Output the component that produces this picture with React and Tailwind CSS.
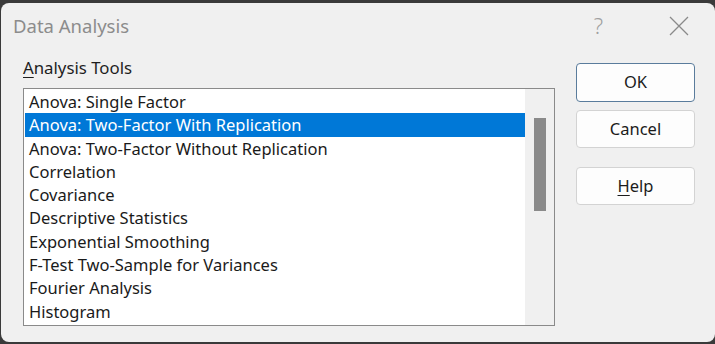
import React from 'react';

const tools = [
  'Anova: Single Factor',
  'Anova: Two-Factor With Replication',
  'Anova: Two-Factor Without Replication',
  'Correlation',
  'Covariance',
  'Descriptive Statistics',
  'Exponential Smoothing',
  'F-Test Two-Sample for Variances',
  'Fourier Analysis',
  'Histogram',
];

const Btn = ({ children, primary }) => (
  <button
    className={`w-[119px] rounded-[4px] border bg-[#fdfdfd] text-[16.5px] text-[#1b1b1b] ${
      primary ? 'h-[39px] border-[#5a7c9c]' : 'h-[38px] border-[#d3d3d3]'
    }`}
  >
    {children}
  </button>
);

export default function App() {
  return (
    <div className="w-[715px] h-[344px] bg-[#3a3a3a] pt-[3px] pl-[1px] overflow-hidden" style={{ fontFamily: '"Noto Sans", "Open Sans", sans-serif' }}>
      <div className="w-[714px] h-[339px] bg-[#f0f0f0] rounded-[8px] flex flex-col">
        {/* title bar */}
        <div className="h-[45px] flex items-center pl-[12px] pr-[26px]">
          <span className="text-[18.5px] text-[#8c8c8c]">Data Analysis</span>
          <span className="ml-auto text-[22px] text-[#a0a0a0] font-light">?</span>
          <svg className="ml-[66px]" width="20" height="20" viewBox="0 0 20 20">
            <path d="M1 1 L19 19 M19 1 L1 19" stroke="#8a8a8a" strokeWidth="1.3" fill="none" />
          </svg>
        </div>

        {/* body */}
        <div className="flex pl-[22px]">
          <div className="flex flex-col">
            <div className="h-[22px] mt-[9px] mb-[9px] text-[16.8px] leading-[22px] text-[#1e1e1e]">
              <span className="underline underline-offset-[3px] decoration-[1px]">A</span>nalysis Tools
            </div>
            <div className="w-[532px] h-[238px] border border-[#8a8a8a] bg-white flex">
              <div className="flex-1 pt-[1px] pl-[1px]">
                {tools.map((t, i) => (
                  <div
                    key={t}
                    className={`h-[23.3px] leading-[24px] pl-[4px] text-[16.5px] whitespace-nowrap ${
                      i === 1 ? 'bg-[#0078d7] text-white' : 'text-[#1a1a1a]'
                    }`}
                  >
                    {t}
                  </div>
                ))}
              </div>
              <div className="w-[29px] bg-[#f0f0f0] pt-[29px] flex justify-center">
                <div className="w-[12px] h-[93px] bg-[#8a8a8a] ml-[1px]" />
              </div>
            </div>
          </div>

          <div className="flex flex-col gap-[8px] ml-[21px] pt-[15px]">
            <Btn primary>OK</Btn>
            <Btn>Cancel</Btn>
            <div className="h-[11px]" />
            <div className="-mt-[8px]">
              <Btn>
                <span className="underline underline-offset-[3px] decoration-[1px]">H</span>elp
              </Btn>
            </div>
          </div>
        </div>
      </div>
    </div>
  );
}
